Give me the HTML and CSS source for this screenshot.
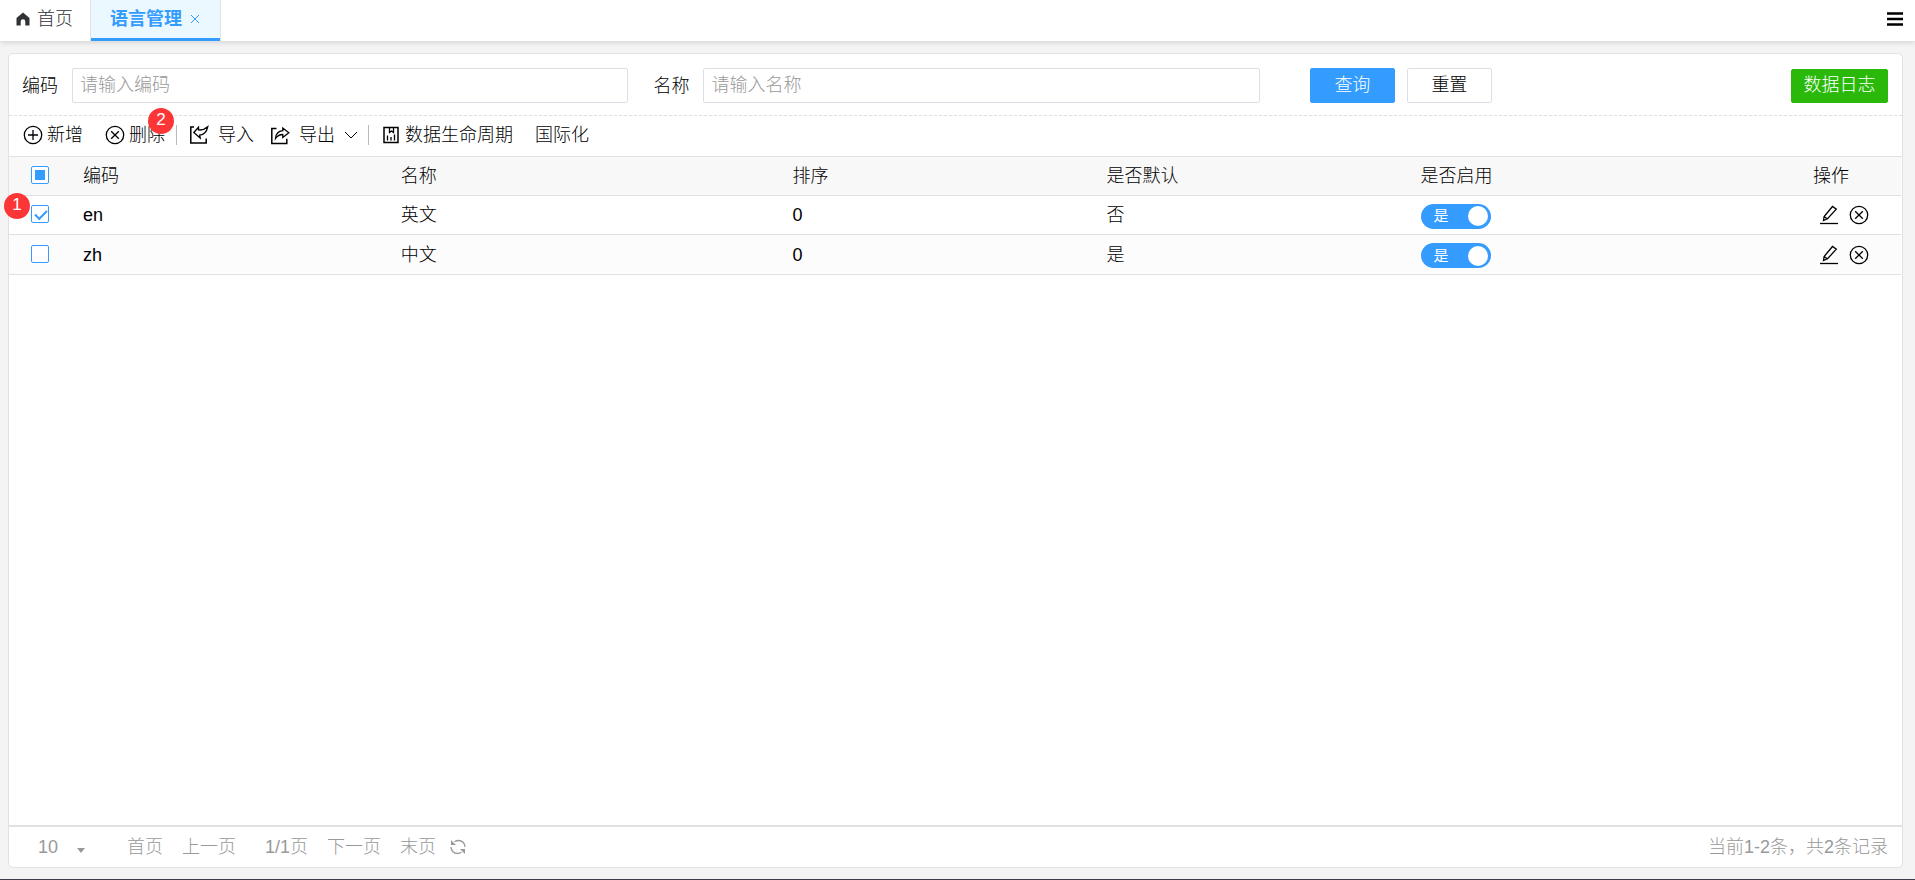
FILE: index.html
```html
<!DOCTYPE html>
<html lang="zh-CN">
<head>
<meta charset="utf-8">
<title>语言管理</title>
<link rel="stylesheet" href="styles.css">
</head>
<body>
<svg class="sprite" aria-hidden="true">
  <symbol id="i-edit" viewBox="0 0 20 20"><path d="M1 18.500h18" stroke-width="1.300"/><path d="M4.500 15.500l.6-4L13.500 1.500l3.800 2.700-8.800 9.600z M5 11.500l3.500 2.500"/></symbol>
  <symbol id="i-cross" viewBox="0 0 20 20"><circle cx="10" cy="10" r="8.700"/><path d="M6.200 6.200l7.600 7.600M13.800 6.200l-7.600 7.600"/></symbol>
</svg>

<header class="topbar">
  <a class="home" href="#"><svg class="home-icon" viewBox="0 0 14 14"><path d="M7 0.500L0.500 6v7.500h4.200V9.500a2.300 2.300 0 0 1 4.600 0v4h4.200V6z"/></svg>首页</a>
  <div class="tab"><a class="tab-link" href="#">语言管理</a><button class="tab-close" aria-label="关闭"><svg viewBox="0 0 10 10"><path d="M1 1l8 8M9 1L1 9"/></svg></button></div>
  <button class="menu" aria-label="菜单"><svg viewBox="0 0 16 14"><path d="M0 1.500h16M0 7h16M0 12.500h16"/></svg></button>
</header>

<main class="panel">
  <form class="search">
    <div class="field"><label for="code">编码</label><input id="code" type="text" placeholder="请输入编码"></div>
    <div class="field"><label for="name">名称</label><input id="name" type="text" placeholder="请输入名称"></div>
    <div class="actions">
      <button class="btn primary" type="button">查询</button>
      <button class="btn" type="reset">重置</button>
    </div>
    <button class="btn log" type="button">数据日志</button>
  </form>

  <div class="toolbar">
    <button class="tool"><svg class="icon" viewBox="0 0 20 20"><circle cx="10" cy="10" r="8.700"/><path d="M5 10h10M10 5v10"/></svg>新增</button>
    <button class="tool delete"><svg class="icon"><use href="#i-cross"/></svg>删除<span class="badge badge-delete">2</span></button>
    <span class="divider"></span>
    <button class="tool wide"><svg class="icon" viewBox="0 0 20 20"><path class="frame" d="M5 2H1.800v16h15.400v-4.500"/><path d="M4.800 7.500L9.500 2.300v2.600c3.500.5 6-.2 9.200-3.100-1 5-3.900 7.800-8 8.300l.5 3z"/></svg>导入</button>
    <button class="tool wide"><svg class="icon" viewBox="0 0 20 20"><path class="frame" d="M6.500 3.500H1.800v15h15v-4.700"/><path d="M5.500 13.500c.3-4.500 2.500-7.300 7.300-7.800V3l6 4.800-6 4.600V9.500c-3.300 0-5.500 1.400-7.300 4z"/></svg>导出<svg class="chevron" viewBox="0 0 14 8"><path d="M1 1l6 6 6-6"/></svg></button>
    <span class="divider"></span>
    <button class="tool data"><svg class="icon small" viewBox="0 0 16 18"><path class="frame" d="M1 1.500h14v15H1z"/><path d="M6.500 2v4.500l2-1.500 2 1.500V2M4.500 14.500V9.500M8 14.500V11M11.500 14.500V8.500"/></svg>数据生命周期</button>
    <button class="tool">国际化</button>
  </div>

  <div class="content">
    <table class="grid">
      <colgroup><col class="c-check"><col class="c-code"><col class="c-name"><col class="c-sort"><col class="c-default"><col><col class="c-ops"></colgroup>
      <thead>
        <tr><th class="check"><input class="box partial" type="checkbox" aria-label="全选"></th><th>编码</th><th>名称</th><th>排序</th><th>是否默认</th><th>是否启用</th><th>操作</th></tr>
      </thead>
      <tbody>
        <tr>
          <td class="check"><input class="box" type="checkbox" aria-label="选择 en" checked><span class="badge badge-row">1</span></td>
          <td>en</td><td>英文</td><td>0</td><td>否</td>
          <td><label class="switch"><input type="checkbox" role="switch" checked><span>是</span></label></td>
          <td><div class="ops"><button aria-label="编辑"><svg class="icon"><use href="#i-edit"/></svg></button><button aria-label="删除"><svg class="icon"><use href="#i-cross"/></svg></button></div></td>
        </tr>
        <tr>
          <td class="check"><input class="box" type="checkbox" aria-label="选择 zh"></td>
          <td>zh</td><td>中文</td><td>0</td><td>是</td>
          <td><label class="switch"><input type="checkbox" role="switch" checked><span>是</span></label></td>
          <td><div class="ops"><button aria-label="编辑"><svg class="icon"><use href="#i-edit"/></svg></button><button aria-label="删除"><svg class="icon"><use href="#i-cross"/></svg></button></div></td>
        </tr>
      </tbody>
    </table>
  </div>

  <footer class="pager">
    <div class="size"><select aria-label="每页条数"><option>10</option></select><svg class="caret" viewBox="0 0 8 5"><path d="M0 0h8L4 5z"/></svg></div>
    <nav class="pages">
      <a href="#">首页</a>
      <a href="#">上一页</a>
      <span class="current">1/1页</span>
      <a href="#">下一页</a>
      <a href="#">末页</a>
      <button class="refresh" aria-label="刷新"><svg viewBox="0 0 16 16"><path d="M1 8c0 4 3 6.500 6.500 6.500 1.500 0 2.800-.5 4-1.200M15 8c0-4-3-6.500-6.500-6.500-1.500 0-2.800.5-4 1.200"/><path class="solid" d="M1 1v5h5zM15 15v-5h-5z"/></svg></button>
    </nav>
    <span class="total">当前1-2条，共2条记录</span>
  </footer>
</main>
</body>
</html>
```
FILE: styles.css
```css
* { box-sizing: border-box; }

body {
  margin: 0;
  height: 100vh;
  display: flex;
  flex-direction: column;
  background: #f4f4f4;
  border-bottom: 1px solid #3a3f4a;
  color: #000;
  font-family: "Liberation Sans", "Noto Sans CJK SC", sans-serif;
  font-size: 18px;
  font-weight: 300;
  line-height: 24px;
}

button, input, select { font: inherit; color: inherit; }
button { padding: 0; border: 0; background: none; cursor: pointer; }
a { color: inherit; text-decoration: none; }
svg { display: block; flex: none; fill: none; stroke: currentColor; }
.sprite { position: absolute; width: 0; height: 0; }

.topbar {
  flex: none;
  display: flex;
  height: 41px;
  background: #fff;
  box-shadow: 0 1px 6px rgba(0, 0, 0, 0.16);
}
.home {
  display: flex;
  align-items: center;
  gap: 7px;
  width: 91px;
  padding: 0 0 3px 16px;
  color: #303336;
}
.home-icon { width: 14px; height: 14px; fill: currentColor; stroke: none; }
.tab {
  display: flex;
  align-items: center;
  gap: 8px;
  padding: 0 20px 0 19px;
  border-bottom: 3px solid #349cff;
  background: #ecf8ff;
  box-shadow: -1px 0 #dfe3e8, 1px 0 #dfe3e8;
  color: #349cff;
}
.tab-link { font-weight: 700; }
.tab-close svg { width: 10px; height: 10px; }
.menu { margin: 0 12px 4px auto; }
.menu svg { width: 16px; height: 14px; stroke-width: 2.4; }

.panel {
  flex: 1;
  min-height: 0;
  display: flex;
  flex-direction: column;
  margin: 12px 12px 11px 8px;
  border: 1px solid #e1e1e1;
  border-radius: 5px;
  background: #fff;
}

.search {
  display: flex;
  align-items: center;
  padding: 14px 14px 12px 13px;
  border-bottom: 1px dashed #e0e0e0;
}
.field {
  flex: 0 1 32.5%;
  display: flex;
  align-items: center;
  gap: 14px;
  margin-right: 25px;
}
.field label { flex: none; }
.field input {
  flex: 1;
  min-width: 0;
  height: 35px;
  padding: 0 7px;
  border: 1px solid #dcdfe6;
  border-radius: 2px;
  background: #fff;
}
.field input::placeholder { color: #999; opacity: 1; }
.actions { display: flex; gap: 12px; margin-left: 25px; }
.btn {
  width: 85px;
  height: 35px;
  padding-bottom: 2px;
  border: 1px solid #dcdfe6;
  border-radius: 2px;
  background: #fff;
}
.primary { border-color: #349cff; background: #349cff; color: #fff; }
.log {
  width: 97px;
  height: 34px;
  margin-left: auto;
  border-color: #2ab90b;
  background: #2ab90b;
  color: #fff;
}

.toolbar {
  display: flex;
  align-items: center;
  height: 41px;
  padding: 0 14px 3px;
  border-bottom: 1px solid #e1e1e1;
}
.tool { display: flex; align-items: center; gap: 4px; margin-right: 22px; }
.icon { width: 20px; height: 20px; stroke-width: 1.3; }
.icon.small { width: 16px; height: 18px; }
.frame { stroke-width: 1.5; }
.delete { position: relative; margin-right: 11px; }
.wide { gap: 9px; margin-right: 16px; }
.wide + .divider { margin-left: -6px; }
.data { gap: 6px; }
.chevron { width: 14px; height: 8px; stroke-width: 1; }
.divider { width: 1px; height: 20px; margin-right: 12px; background: #bbb; }
.divider + .data { margin-left: 2px; }
.badge {
  position: absolute;
  width: 26px;
  height: 26px;
  border-radius: 50%;
  background: #fc3637;
  color: #fff;
  font-size: 17px;
  line-height: 24px;
  text-align: center;
}
.badge-delete { top: -15px; right: -9px; }
.badge-row { top: -3px; left: -5px; }

.content { flex: 1; min-height: 0; padding-right: 1px; }
.grid {
  width: 100%;
  table-layout: fixed;
  border-collapse: separate;
  border-spacing: 0;
}
.c-check { width: 64px; }
.c-code { width: 16.8%; }
.c-name { width: 20.7%; }
.c-sort, .c-default { width: 16.6%; }
.c-ops { width: 98px; }
.grid th, .grid td {
  height: 39px;
  padding: 0 0 0 10px;
  border-bottom: 1px solid #e1e1e1;
  font-weight: inherit;
  text-align: left;
}
.grid th { background: #f8f8f8; }
.grid tbody tr:nth-child(2) td { height: 40px; background: #fcfcfc; }
.grid .check { position: relative; padding: 0 0 2px 22px; }
.box {
  appearance: none;
  display: block;
  width: 18px;
  height: 18px;
  margin: 0;
  border: 1px solid #349cff;
  border-radius: 2px;
  background: #fff;
}
.partial::before {
  content: "";
  display: block;
  width: 10px;
  height: 10px;
  margin: 3px;
  background: #349cff;
}
.box:checked::before {
  content: "";
  display: block;
  width: 10px;
  height: 5px;
  margin: 4px 3px;
  border: solid #349cff;
  border-width: 0 0 2px 2px;
  transform: rotate(-45deg);
}
.switch {
  display: grid;
  align-items: center;
  width: 70px;
  height: 25px;
  margin-top: 2px;
}
.switch input, .switch span { grid-area: 1 / 1; }
.switch input {
  appearance: none;
  display: flex;
  align-items: center;
  justify-content: flex-end;
  height: 25px;
  margin: 0;
  padding: 0 3px;
  border-radius: 13px;
  background: #349cff;
}
.switch input::after {
  content: "";
  width: 20px;
  height: 20px;
  border-radius: 50%;
  background: #fff;
}
.switch span { padding-left: 13px; color: #fff; font-size: 15px; font-weight: 400; z-index: 1; }
.ops { display: flex; gap: 10px; padding-left: 6px; }

.pager {
  display: flex;
  align-items: center;
  height: 42px;
  padding: 0 14px 0 29px;
  border-top: 2px solid #e1e1e1;
  color: #999;
}
.size { position: relative; width: 89px; }
.size select {
  appearance: none;
  width: 56px;
  padding: 0;
  border: 0;
  background: none;
}
.caret {
  position: absolute;
  top: 13px;
  left: 39px;
  width: 8px;
  height: 5px;
  fill: currentColor;
  stroke: none;
  pointer-events: none;
}
.pages { display: flex; align-items: center; gap: 19px; }
.current { margin-left: 10px; }
.refresh { margin-left: -5px; }
.refresh svg { width: 16px; height: 16px; stroke-width: 1.3; }
.refresh .solid { fill: currentColor; stroke: none; }
.total { margin-left: auto; }
```
